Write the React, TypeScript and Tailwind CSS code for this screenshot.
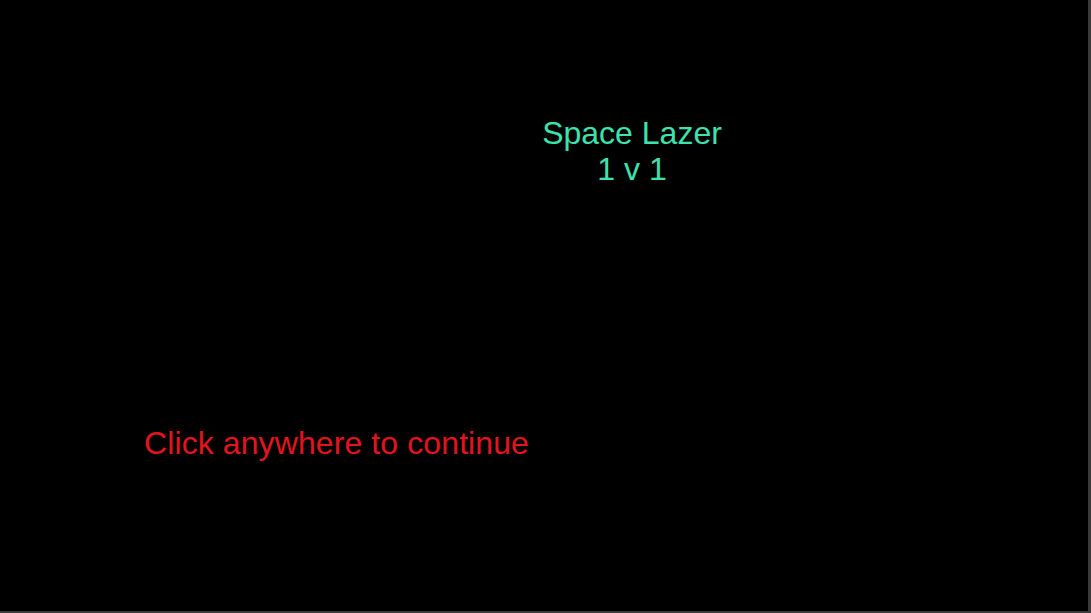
import React from "react";

const App: React.FC = () => {
  return (
    <div className="w-[1091px] h-[613px] bg-black border-r-[3px] border-b-[2px] border-[#3a3a3a] font-['Liberation_Sans',Arial,sans-serif] text-[32px] leading-[36px]">
      <div className="pt-[115px] ml-[432px] w-[400px] flex flex-col items-center text-[#3de3ad]">
        <div>Space Lazer</div>
        <div>1 v 1</div>
      </div>
      <div className="mt-[238px] ml-[144px] text-[#e3141e] tracking-[0.1px]">Click anywhere to continue</div>
    </div>
  );
};

export default App;
